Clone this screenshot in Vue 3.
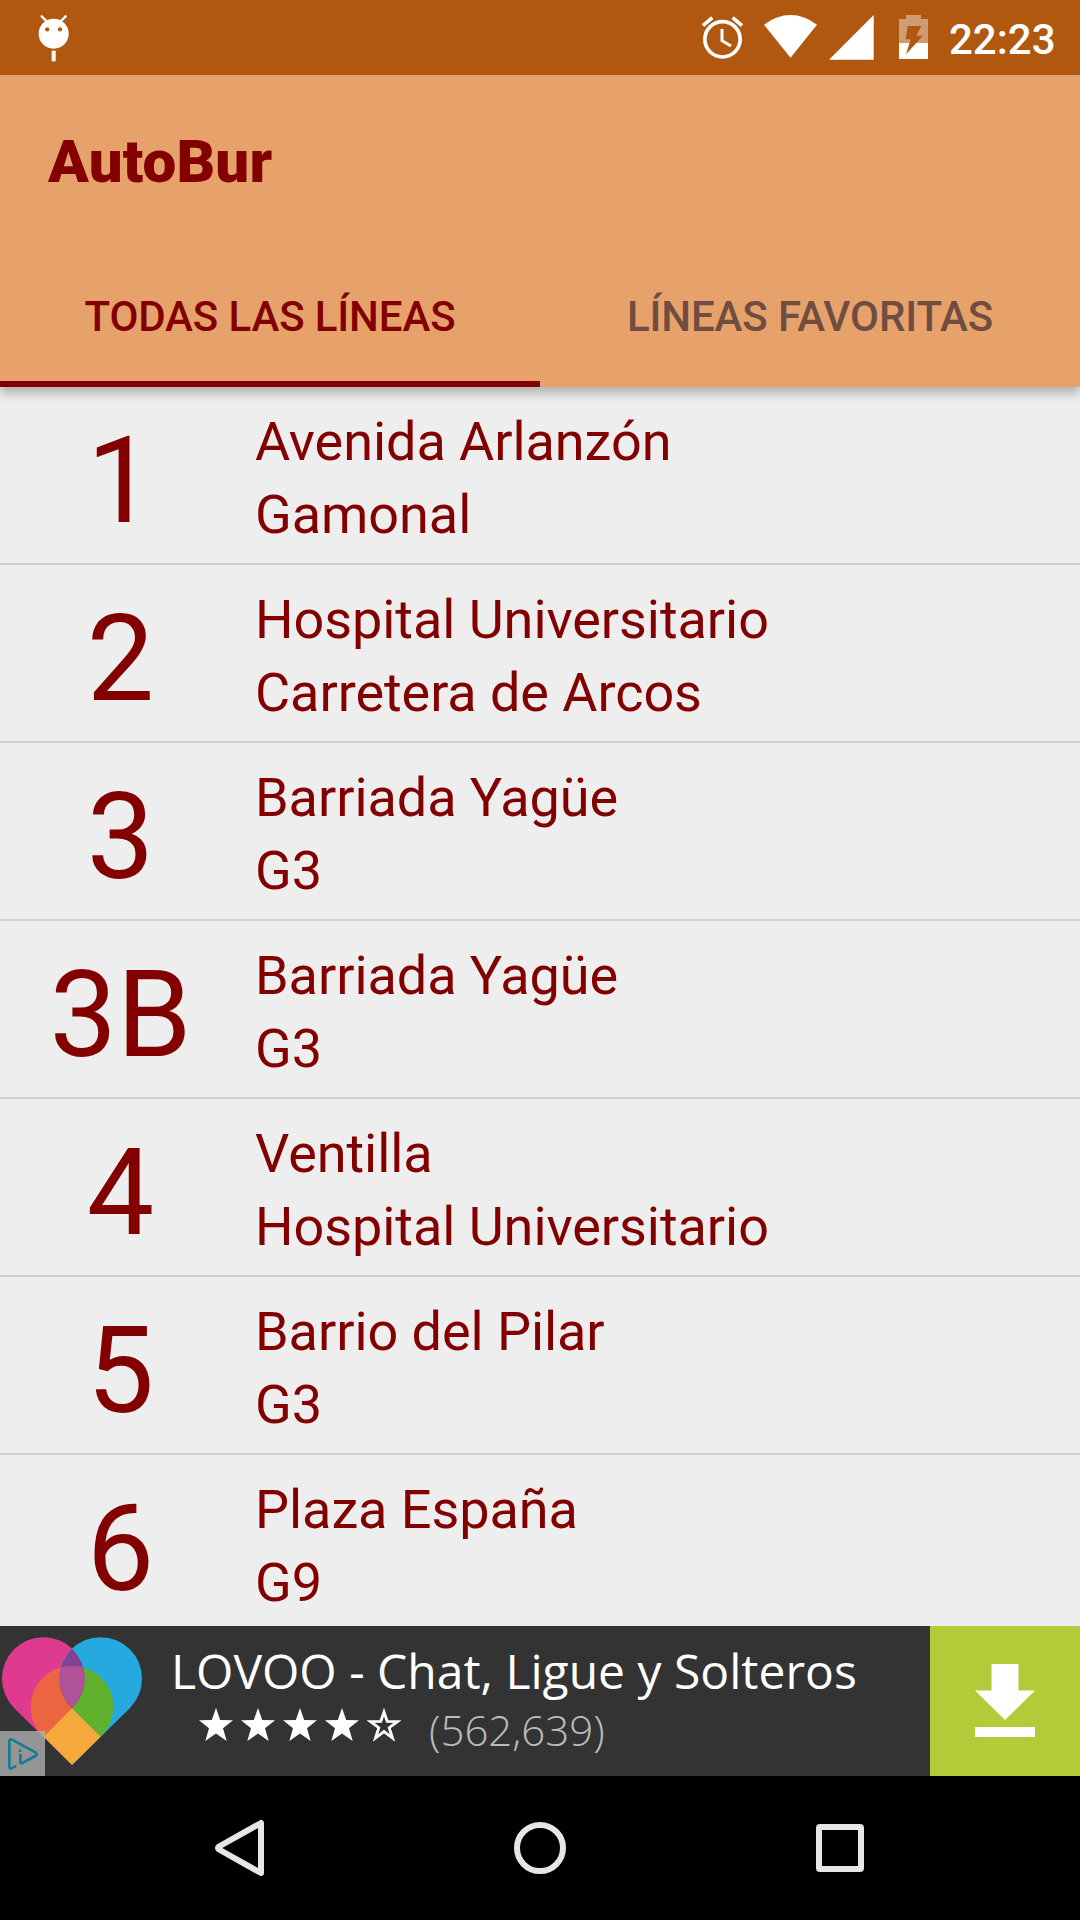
<template>
  <div class="screen">
    <header class="status-bar">
      <svg class="debug-icon" width="32" height="48" viewBox="115 45 96 144">
        <path d="M126 49L140 63M198 49L184 63" stroke="#fff" stroke-width="7" stroke-linecap="round" />
        <circle cx="162" cy="101" r="45" fill="#fff" />
        <circle cx="142.500" cy="88" r="6.500" fill="#b15810" />
        <circle cx="181" cy="88" r="6.500" fill="#b15810" />
        <rect x="156" y="152" width="12" height="32" fill="#fff" />
      </svg>
      <div class="status-icons">
        <svg class="alarm" width="43" height="45" viewBox="63 45 129 135" fill="none" stroke="#fff">
          <circle cx="127.500" cy="118" r="53" stroke-width="11" />
          <path d="M69 77L97 53M158 53L186 77" stroke-width="11" />
          <path d="M126 87V122L153 138" stroke-width="9" />
        </svg>
        <svg class="wifi" width="53" height="45" viewBox="252 45 159 135">
          <path d="M252 74Q290 45 331.500 45Q373 45 411 74L331.500 173Z" fill="#fff" />
        </svg>
        <svg class="signal" width="45" height="45" viewBox="447 45 135 135">
          <path d="M581 45V179H447Z" fill="#fff" />
        </svg>
        <svg class="battery" width="29" height="45" viewBox="657 45 87 135">
          <path d="M678 45H723V57H744V129H657V57H678Z" fill="#d09b70" />
          <path d="M657 129H744V177H657Z" fill="#fff" />
          <path d="M683 78H724L709 107H729L678 163L692 118H677Z" fill="#b15810" />
        </svg>
        <span class="clock">22:23</span>
      </div>
    </header>

    <div class="app-bar">
      <h1>AutoBur</h1>
      <nav class="tabs">
        <button
          v-for="(tab, index) in tabs"
          :key="tab"
          class="tab"
          :class="{ active: index === activeTab }"
          @click="activeTab = index"
        >{{ tab }}</button>
      </nav>
    </div>

    <ul class="lines">
      <li v-for="line in lines" :key="line.number" class="line">
        <div class="number">{{ line.number }}</div>
        <div class="stops">
          <div>{{ line.from }}</div>
          <div>{{ line.to }}</div>
        </div>
      </li>
    </ul>

    <div class="ad">
      <div class="ad-logo">
        <svg width="150" height="150" viewBox="0 78 450 450">
          <path d="M42 324L216 150V495Z" fill="#de3b8f" />
          <circle cx="130.500" cy="236" r="124.500" fill="#de3b8f" />
          <path d="M390 324L216 325V495Z" fill="#25a9df" />
          <circle cx="301.500" cy="236" r="124.500" fill="#25a9df" />
          <path d="M216 197A124 124 0 0 0 128.500 409L216 440Z" fill="#eb6542" />
          <path d="M216 197A124 124 0 0 1 303.500 409L216 440Z" fill="#60b12d" />
          <path d="M216 146A124.500 124.500 0 0 1 216 325A124.500 124.500 0 0 1 216 146Z" fill="#824292" />
          <path d="M182 202Q216 193 250 202Q267 268 216 325Q165 268 182 202Z" fill="#b05299" />
          <path d="M216 325L302 410L216 495L131 410Z" fill="#f6a93d" />
        </svg>
        <svg class="ad-choices" width="45" height="45" viewBox="0 393 135 135" fill="none" stroke="#137d93" stroke-linecap="round" stroke-linejoin="round">
          <path d="M46 499L34 505Q28 507 28 500V425Q28 416 36 419L106 457Q114 463 106 468L69 488Q61 493 61 485V465" stroke-width="8" />
          <circle cx="60" cy="452" r="4.500" fill="#137d93" stroke="none" />
        </svg>
      </div>
      <div class="ad-body">
        <div class="ad-title">LOVOO - Chat, Ligue y Solteros</div>
        <div class="rating">
          <svg v-for="n in 5" :key="n" width="34" height="34" viewBox="0 0 34 34">
            <path v-if="n <= stars" d="M17 0L21.200 12L34 12.300L24 20.300L27.700 33L17 25.500L6.300 33L10 20.300L0 12.300L12.800 12Z" fill="#fff" />
            <path v-else d="M17 4L20.200 13.300L30.500 13.500L22.200 19.700L25.500 30L17 23.600L8.500 30L11.800 19.700L3.500 13.500L13.800 13.300Z" fill="none" stroke="#fff" stroke-width="2.800" />
          </svg>
          <span class="reviews">(562,639)</span>
        </div>
      </div>
      <div class="download">
        <svg width="62" height="76" viewBox="0 0 62 76" fill="#fff">
          <path d="M17.500 1H44.500V27.500H61L31 57L1 27.500H17.500Z" />
          <rect x="1" y="64" width="60" height="10" />
        </svg>
      </div>
    </div>

    <footer class="nav-bar">
      <svg width="60" height="60" viewBox="0 0 60 60">
        <path d="M9 28.500L51 5V55L9 31.500Q7 30 9 28.500Z" />
      </svg>
      <svg width="60" height="60" viewBox="0 0 60 60">
        <circle cx="30" cy="30" r="23" />
      </svg>
      <svg width="60" height="60" viewBox="0 0 60 60">
        <rect x="9" y="9" width="42" height="42" rx="1" />
      </svg>
    </footer>
  </div>
</template>

<script setup>
import { ref } from 'vue';

const tabs = ['TODAS LAS LÍNEAS', 'LÍNEAS FAVORITAS'];
const activeTab = ref(0);
const stars = 4;

const lines = ref([
  { number: '1', from: 'Avenida Arlanzón', to: 'Gamonal' },
  { number: '2', from: 'Hospital Universitario', to: 'Carretera de Arcos' },
  { number: '3', from: 'Barriada Yagüe', to: 'G3' },
  { number: '3B', from: 'Barriada Yagüe', to: 'G3' },
  { number: '4', from: 'Ventilla', to: 'Hospital Universitario' },
  { number: '5', from: 'Barrio del Pilar', to: 'G3' },
  { number: '6', from: 'Plaza España', to: 'G9' }
]);
</script>

<style>
body {
  margin: 0;
  background: #000;
}
</style>

<style scoped>
.screen {
  display: flex;
  flex-direction: column;
  width: 1080px;
  height: 1920px;
  overflow: hidden;
  font-family: Roboto, sans-serif;
  color: #830000;
  background: #eee;
}
svg {
  display: block;
  flex: none;
}
.status-bar {
  display: flex;
  justify-content: space-between;
  box-sizing: border-box;
  flex: none;
  height: 75px;
  padding: 15px 0 0 38px;
  background: #b15810;
}
.status-icons {
  display: flex;
}
.wifi {
  margin-left: 20px;
}
.signal {
  margin-left: 12px;
}
.battery {
  margin-left: 25px;
}
.clock {
  width: 131px;
  margin-left: 21px;
  font-size: 42px;
  font-weight: 500;
  line-height: 50px;
  color: #fff;
}
.app-bar {
  display: flex;
  flex-direction: column;
  justify-content: space-between;
  flex: none;
  height: 312px;
  background: #e7a26c;
  box-shadow: 0 7px 9px rgba(0, 0, 0, 0.24);
  z-index: 1;
}
h1 {
  margin: 0;
  padding: 52px 48px 0;
  font-size: 60px;
  font-weight: 900;
  line-height: 70px;
  letter-spacing: 0.15px;
}
.tabs {
  display: flex;
}
.tab {
  flex: 1;
  box-sizing: border-box;
  height: 144px;
  padding: 9px 0 0;
  border: none;
  border-bottom: 6px solid transparent;
  background: none;
  font-family: inherit;
  font-size: 42px;
  font-weight: 500;
  line-height: 129px;
  letter-spacing: -0.12px;
  color: #6f4d41;
}
.tab.active {
  color: #830000;
  border-bottom-color: #830000;
}
.lines {
  flex: 1;
  min-height: 0;
  margin: 0;
  padding: 0;
  overflow: hidden;
  list-style: none;
}
.line {
  display: flex;
  height: 176px;
  border-bottom: 2px solid #cfcfcf;
}
.number {
  width: 240px;
  padding-top: 6px;
  font-size: 120px;
  line-height: 176px;
  text-align: center;
  text-indent: 1px;
}
.stops {
  padding: 18px 0 0 15px;
  font-size: 54px;
  line-height: 73px;
  letter-spacing: -0.06px;
}
.ad {
  display: flex;
  flex: none;
  height: 150px;
  background: #333;
  color: #fff;
  font-family: "Open Sans", sans-serif;
}
.ad-logo {
  position: relative;
  width: 150px;
}
.ad-choices {
  position: absolute;
  left: 0;
  bottom: 0;
  background: rgba(180, 180, 180, 0.76);
}
.ad-body {
  flex: 1;
  padding: 13px 0 0 21px;
}
.ad-title {
  font-size: 48px;
  line-height: 64px;
  white-space: nowrap;
}
.rating {
  display: flex;
  align-items: center;
  gap: 8px;
  padding-left: 28px;
  height: 43px;
}
.reviews {
  margin: 11px 0 0 20px;
  font-size: 42px;
  font-weight: 300;
  line-height: 42px;
  color: #bbb;
}
.download {
  display: flex;
  align-items: center;
  justify-content: center;
  width: 150px;
  box-sizing: border-box;
  background: #b2cb39;
}
.nav-bar {
  display: flex;
  align-items: center;
  justify-content: center;
  gap: 240px;
  flex: none;
  height: 144px;
  background: #000;
}
.nav-bar svg {
  fill: none;
  stroke: #e6e6e6;
  stroke-width: 6;
  stroke-linejoin: round;
}
</style>
